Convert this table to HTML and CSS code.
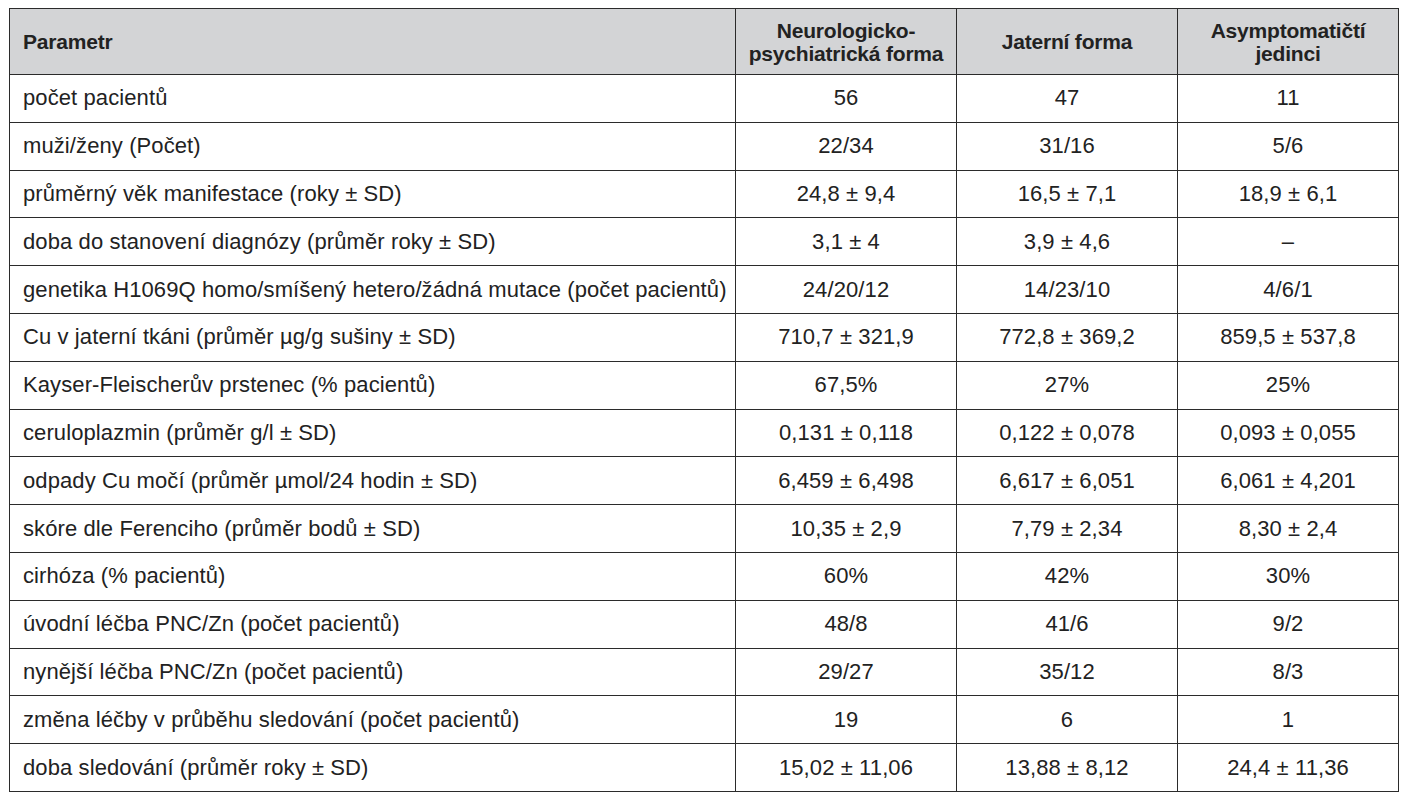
FILE: index.html
```html
<!DOCTYPE html>
<html lang="cs">
<head>
  <meta charset="UTF-8">
  <title>Charakteristika pacientů</title>
  <link rel="stylesheet" href="styles.css">
</head>
<body>
  <table class="data-table">
    <colgroup>
      <col class="col-param">
      <col class="col-val">
      <col class="col-val">
      <col class="col-val">
    </colgroup>
    <thead>
      <tr>
        <th class="param">Parametr</th>
        <th>Neurologicko-<br>psychiatrická forma</th>
        <th>Jaterní forma</th>
        <th>Asymptomatičtí<br>jedinci</th>
      </tr>
    </thead>
    <tbody>
      <tr><td>počet pacientů</td><td>56</td><td>47</td><td>11</td></tr>
      <tr><td>muži/ženy (Počet)</td><td>22/34</td><td>31/16</td><td>5/6</td></tr>
      <tr><td>průměrný věk manifestace (roky ± SD)</td><td>24,8 ± 9,4</td><td>16,5 ± 7,1</td><td>18,9 ± 6,1</td></tr>
      <tr><td>doba do stanovení diagnózy (průměr roky ± SD)</td><td>3,1 ± 4</td><td>3,9 ± 4,6</td><td>–</td></tr>
      <tr><td>genetika H1069Q homo/smíšený hetero/žádná mutace (počet pacientů)</td><td>24/20/12</td><td>14/23/10</td><td>4/6/1</td></tr>
      <tr><td>Cu v jaterní tkáni (průměr µg/g sušiny ± SD)</td><td>710,7 ± 321,9</td><td>772,8 ± 369,2</td><td>859,5 ± 537,8</td></tr>
      <tr><td>Kayser-Fleischerův prstenec (% pacientů)</td><td>67,5%</td><td>27%</td><td>25%</td></tr>
      <tr><td>ceruloplazmin (průměr g/l ± SD)</td><td>0,131 ± 0,118</td><td>0,122 ± 0,078</td><td>0,093 ± 0,055</td></tr>
      <tr><td>odpady Cu močí (průměr µmol/24 hodin ± SD)</td><td>6,459 ± 6,498</td><td>6,617 ± 6,051</td><td>6,061 ± 4,201</td></tr>
      <tr><td>skóre dle Ferenciho (průměr bodů ± SD)</td><td>10,35 ± 2,9</td><td>7,79 ± 2,34</td><td>8,30 ± 2,4</td></tr>
      <tr><td>cirhóza (% pacientů)</td><td>60%</td><td>42%</td><td>30%</td></tr>
      <tr><td>úvodní léčba PNC/Zn (počet pacientů)</td><td>48/8</td><td>41/6</td><td>9/2</td></tr>
      <tr><td>nynější léčba PNC/Zn (počet pacientů)</td><td>29/27</td><td>35/12</td><td>8/3</td></tr>
      <tr><td>změna léčby v průběhu sledování (počet pacientů)</td><td>19</td><td>6</td><td>1</td></tr>
      <tr><td>doba sledování (průměr roky ± SD)</td><td>15,02 ± 11,06</td><td>13,88 ± 8,12</td><td>24,4 ± 11,36</td></tr>
    </tbody>
  </table>
</body>
</html>
```

FILE: styles.css
```css
:root {
  --line: #2b2b2b;
  --head-bg: #d3d4d6;
  --text: #222;
}

* {
  box-sizing: border-box;
}

body {
  margin: 0;
  padding: 8px 0 0 9px;
  background: #fff;
  color: var(--text);
  font-family: "Liberation Sans", Arial, sans-serif;
}

/* tabulka */
.data-table {
  width: 1390px;
  border-collapse: collapse;
  table-layout: fixed;
  font-size: 22px;
}

.col-param {
  width: 726px;
}

.col-val {
  width: 221px;
}

.data-table th,
.data-table td {
  border: 1.5px solid var(--line);
  padding: 0 4px;
  text-align: center;
  vertical-align: middle;
}

.data-table th {
  height: 66px;
  background: var(--head-bg);
  font-weight: bold;
  font-size: 21px;
  line-height: 23px;
  letter-spacing: -0.2px;
}

.data-table th.param {
  text-align: left;
  padding-left: 13px;
}

.data-table td {
  height: 47.8px;
  letter-spacing: 0.1px;
}

.data-table td:first-child {
  text-align: left;
  padding-left: 13px;
  white-space: nowrap;
}
```
